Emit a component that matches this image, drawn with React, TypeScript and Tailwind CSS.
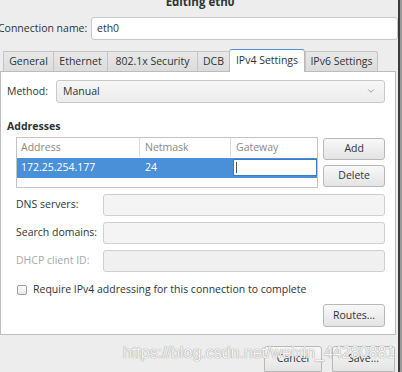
import React from "react";
import { ChevronDown } from "lucide-react";

const font = { fontFamily: '"Open Sans", "DejaVu Sans", sans-serif' };

const tabs: [string, string][] = [
  ["General", "w-[50px]"],
  ["Ethernet", "w-[54px]"],
  ["802.1x Security", "w-[90px]"],
  ["DCB", "w-[32px]"],
  ["IPv4 Settings", "w-[76px]"],
  ["IPv6 Settings", "w-[73px]"],
];

const Button: React.FC<{ label: string; className?: string }> = ({ label, className = "" }) => (
  <button
    type="button"
    className={`flex items-center justify-center rounded-[3px] border border-[#b8b8b8] bg-gradient-to-b from-[#f8f8f8] to-[#e4e4e4] text-[10.5px] text-[#2e3436] ${className}`}
  >
    {label}
  </button>
);

const Field: React.FC<{ label: string; disabled?: boolean }> = ({ label, disabled }) => (
  <div className="flex h-[22px] items-center">
    <span className={`w-[96px] whitespace-nowrap pl-[9px] ${disabled ? "text-[#a8a8a8]" : "text-[#2e3436]"}`}>{label}</span>
    <div className={`h-[22px] flex-1 rounded-[3px] border border-[#cfcfcf] ${disabled ? "bg-[#f0f0f0]" : "bg-[#f4f4f4]"}`} />
  </div>
);

export default function App() {
  return (
    <div className="flex h-[372px] w-[402px] overflow-hidden whitespace-nowrap bg-[#ededed] text-[10.5px] text-[#2e3436]" style={font}>
      <div className="flex w-[398px] flex-col">
        <div className="h-[12px] text-center text-[11.5px] font-bold leading-[12px] text-[#2e3436]">
          <div className="-mt-[4px] pl-[2px]">Editing eth0</div>
        </div>

        <div className="mt-[5px] flex h-[23px] items-center">
          <span className="-ml-[2px] w-[93px]">Connection name:</span>
          <div className="flex h-[23px] flex-1 items-center rounded-[3px] border border-[#c8c8c8] bg-white pl-[5px] text-[#2e3436]">
            eth0
          </div>
        </div>

        <div className="mt-[9px] flex h-[22px] items-end pl-[3px]">
          {tabs.map(([t, w]) =>
            t === "IPv4 Settings" ? (
              <div
                key={t}
                className={`relative z-10 -mb-px flex h-[23px] items-center justify-center rounded-t-[3px] border border-b-0 border-[#bcbcbc] border-t-[#4a90d9] bg-white text-[#2e3436] ${w}`}
              >
                {t}
              </div>
            ) : (
              <div
                key={t}
                className={`flex h-[20px] items-center justify-center border-t border-l border-[#c4c4c4] bg-gradient-to-b from-[#e8e8e8] to-[#dcdcdc] text-[#2e3436] ${w} ${t === "IPv6 Settings" ? "rounded-tr-[3px] border-r" : ""}`}
              >
                {t}
              </div>
            )
          )}
        </div>

        <div className="flex h-[267px] w-[396px] flex-col border border-[#bcbcbc] bg-white pr-[10px]">
          <div className="mt-[8px] flex h-[23px] items-center">
            <span className="w-[55px] pl-[6px]">Method:</span>
            <div className="flex h-[23px] flex-1 items-center justify-between rounded-[3px] border border-[#c8c8c8] bg-gradient-to-b from-[#f6f6f6] to-[#ececec] pl-[6px] pr-[8px]">
              <span>Manual</span>
              <ChevronDown className="h-[10px] w-[10px] text-[#8a8a8a]" strokeWidth={2} />
            </div>
          </div>

          <div className="mt-[16px] pl-[6px] font-bold">Addresses</div>

          <div className="mt-[2px] flex pl-[15px]">
            <div className="h-[51px] w-[304px] border border-[#c4c4c4] bg-white">
              <div className="flex h-[20px] items-center text-[#888a85]">
                <span className="w-[123px] border-r border-[#dcdcdc] pl-[4px] leading-[19px]">Address</span>
                <span className="w-[91px] border-r border-[#dcdcdc] pl-[5px] leading-[19px]">Netmask</span>
                <span className="pl-[5px]">Gateway</span>
              </div>
              <div className="flex h-[20px] items-center bg-[#4a90d9] text-white">
                <span className="w-[123px] pl-[4px]">172.25.254.177</span>
                <span className="w-[93px] pl-[5px]">24</span>
                <div className="h-[17px] w-[84px] border border-[#3b7bbf] bg-white">
                  <div className="ml-[2px] mt-[2px] h-[11px] w-px bg-[#555]" />
                </div>
              </div>
            </div>
            <div className="ml-[5px] flex w-[62px] flex-col gap-[5px] pt-px">
              <Button label="Add" className="h-[22px]" />
              <Button label="Delete" className="h-[22px]" />
            </div>
          </div>

          <div className="mt-[6px] flex flex-col gap-[6px] pl-[6px]">
            <Field label="DNS servers:" />
            <Field label="Search domains:" />
            <Field label="DHCP client ID:" disabled />
          </div>

          <div className="mt-[10px] flex items-center pl-[16px]">
            <div className="h-[10px] w-[10px] rounded-[2px] border border-[#a0a0a0] bg-gradient-to-b from-white to-[#e8e8e8]" />
            <span className="ml-[6px]">Require IPv4 addressing for this connection to complete</span>
          </div>

          <div className="mt-[7px] flex justify-end">
            <Button label="Routes..." className="h-[23px] w-[62px]" />
          </div>
        </div>

        <div className="relative flex flex-1 justify-end gap-[10px] pr-[3px] pt-[11px]">
          <Button label="Cancel" className="h-[26px] w-[58px] rounded-b-none" />
          <Button label="Save..." className="h-[26px] w-[63px] rounded-b-none" />
          <span
            className="pointer-events-none absolute left-[123px] top-[6px] text-[16px] text-white/90"
            style={{ fontFamily: '"Liberation Sans", Arial, sans-serif', textShadow: "0 0 1px #999, 0 0 1px #999" }}
          >
            https://blog.csdn.net/weixin_44280881
          </span>
        </div>
      </div>
      <div className="flex w-[4px]">
        <div className="w-[2px] bg-[#3c3c3c]" />
        <div className="w-[2px] bg-[#9a9a9a]" />
      </div>
    </div>
  );
}
